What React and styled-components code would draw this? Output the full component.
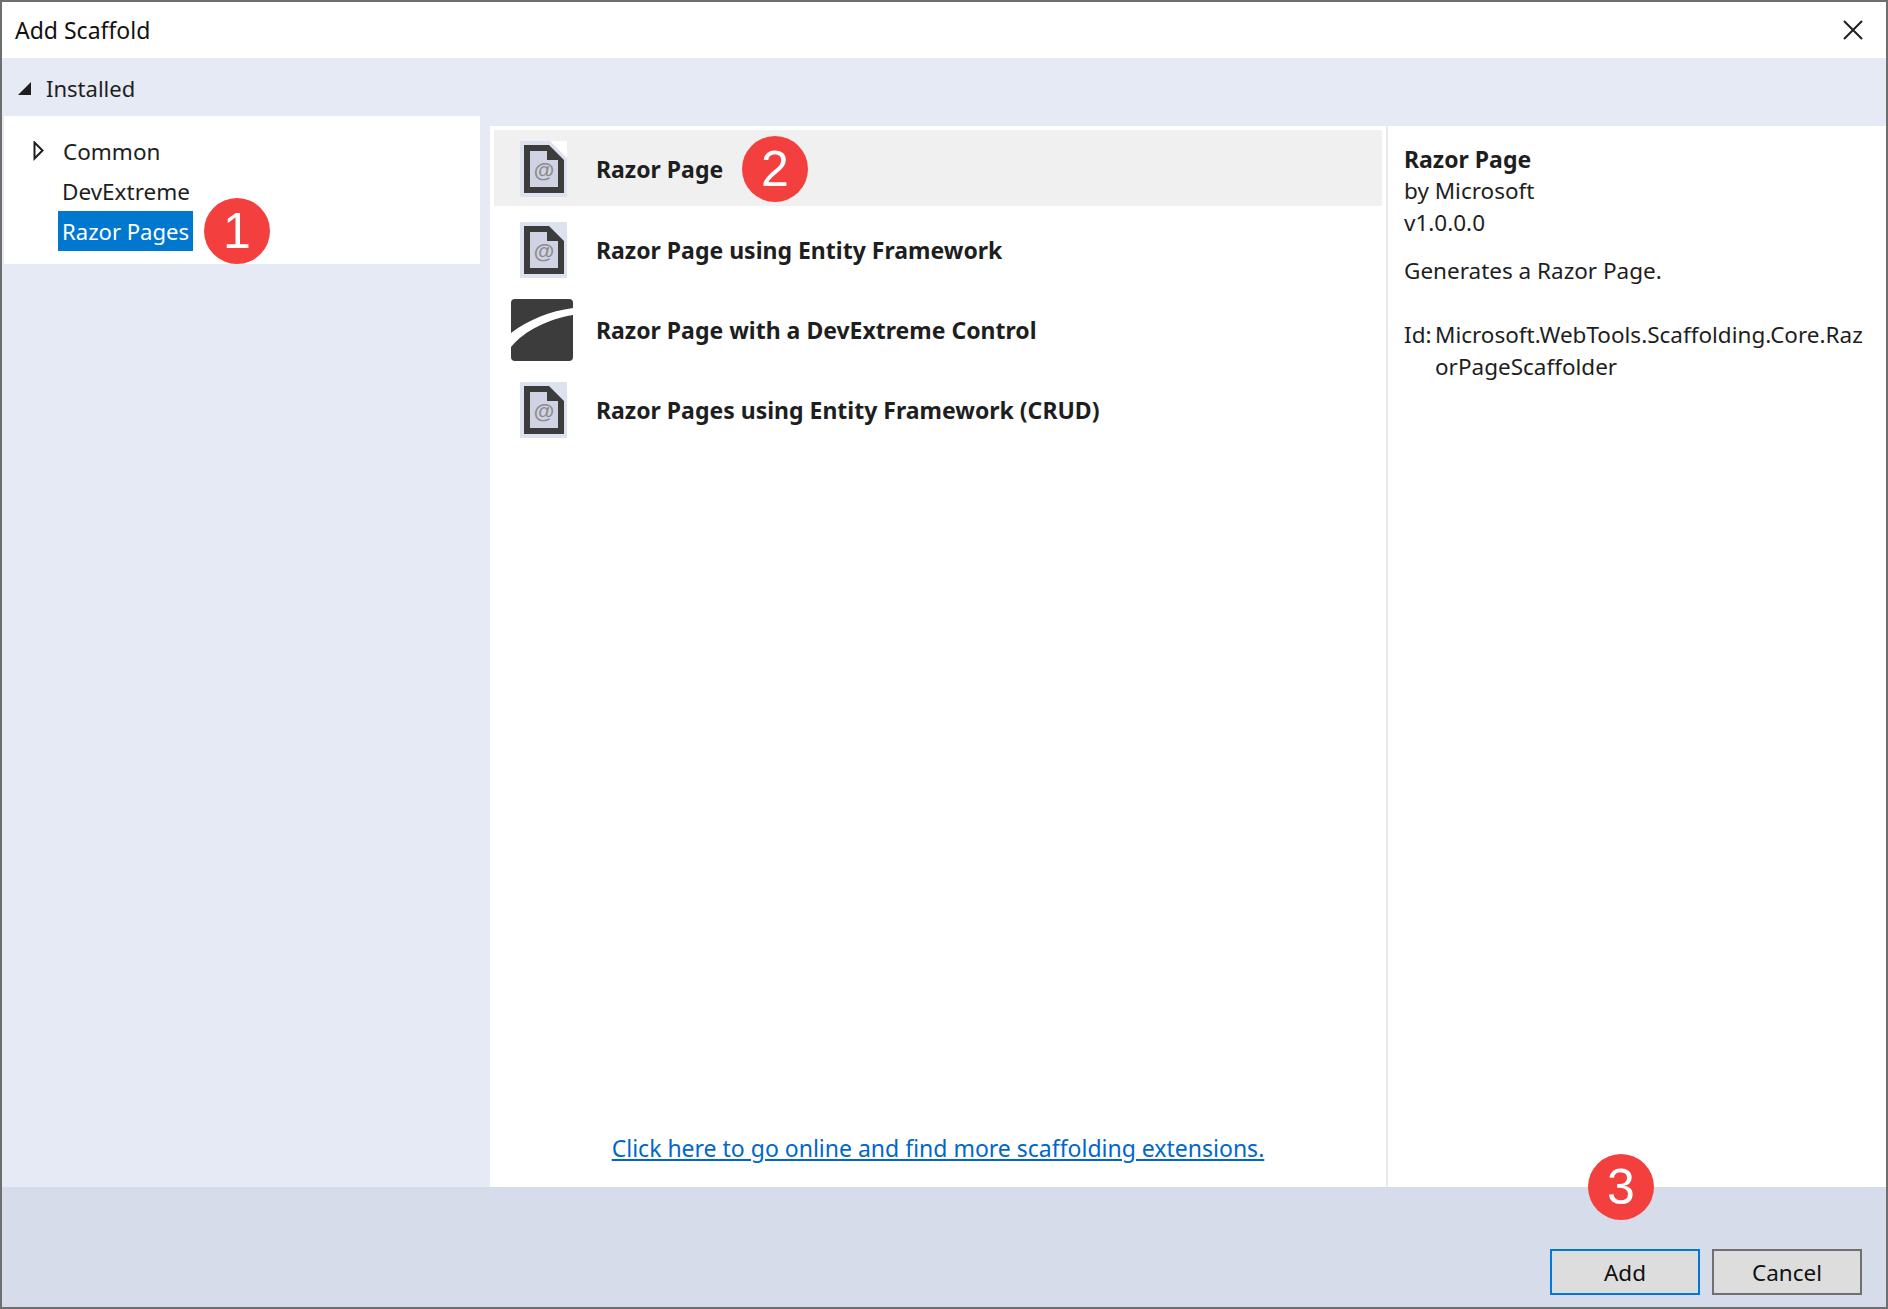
import React from "react";
import styled, { createGlobalStyle } from "styled-components";

const GlobalStyle = createGlobalStyle`
  html, body {
    margin: 0;
    padding: 0;
    background: #6e6e6e;
  }
  * {
    box-sizing: border-box;
  }
`;

const Page = styled.div`
  width: 1888px;
  height: 1309px;
  padding: 2px;
  font-family: "Noto Sans", "Open Sans", sans-serif;
  font-size: 22.5px;
  color: #1e1e1e;
`;

const Dialog = styled.div`
  position: relative;
  width: 1884px;
  height: 1305px;
  display: flex;
  flex-direction: column;
  background: #e6eaf5;
`;

const TitleBar = styled.div`
  height: 56px;
  flex: none;
  background: #fff;
  display: flex;
  align-items: center;
  justify-content: space-between;
  padding: 0 23px 0 13px;
  font-size: 23px;
  color: #111;
`;

const CloseIcon = styled.svg`
  width: 20px;
  height: 20px;
  stroke: #1e1e1e;
  stroke-width: 2;
`;

const InstalledBar = styled.div`
  height: 58px;
  flex: none;
  display: flex;
  align-items: center;
  gap: 14px;
  padding: 2px 0 0 15px;
  font-size: 22px;
`;

const Columns = styled.div`
  flex: 1;
  min-height: 0;
  display: flex;
`;

const TreePane = styled.div`
  width: 488px;
  flex: none;
  padding-left: 2px;
`;

const Tree = styled.div`
  position: relative;
  width: 476px;
  height: 148px;
  background: #fff;
  padding-top: 15px;
`;

const TreeRow = styled.div`
  height: 40px;
  display: flex;
  align-items: center;
  padding-left: ${(p) => (p.$arrow ? "29px" : "58px")};
  gap: 19px;
`;

const SelectedLabel = styled.span`
  height: 40px;
  margin-left: -4px;
  padding: 0 4px;
  display: flex;
  align-items: center;
  background: #0078d0;
  color: #fff;
  font-size: 22.1px;
`;

const Badge = styled.div`
  position: absolute;
  left: ${(p) => p.$left}px;
  top: ${(p) => p.$top}px;
  width: 66px;
  height: 66px;
  border-radius: 50%;
  background: #f43f3f;
  color: #fff;
  display: flex;
  align-items: center;
  justify-content: center;
  font-family: "Liberation Sans", Arial, sans-serif;
  font-size: 50px;
  line-height: 1;
`;

const Content = styled.div`
  flex: 1;
  min-width: 0;
  margin-top: 10px;
  display: flex;
  background: #fff;
`;

const ListPane = styled.div`
  position: relative;
  width: 896px;
  flex: none;
  padding: 4px;
  display: flex;
  flex-direction: column;
`;

const Row = styled.div`
  height: ${(p) => (p.$selected ? 76 : 80)}px;
  margin-bottom: ${(p) => (p.$selected ? 4 : 0)}px;
  padding-top: ${(p) => (p.$selected ? 2 : 0)}px;
  flex: none;
  display: flex;
  align-items: center;
  background: ${(p) => (p.$selected ? "#f0f0f0" : "transparent")};
  font-size: 23px;
  font-weight: 700;
`;

const IconSlot = styled.div`
  width: 102px;
  flex: none;
  display: flex;
  justify-content: center;
  padding-right: ${(p) => (p.$logo ? 6 : 2)}px;
`;

const LinkLine = styled.div`
  margin-top: auto;
  padding-bottom: 19px;
  text-align: center;
  font-size: 23px;
`;

const MoreLink = styled.a`
  color: #0066cc;
  text-decoration: underline;
  cursor: pointer;
`;

const Details = styled.div`
  flex: 1;
  border-left: 2px solid #e6eaf5;
  padding: 17px 16px 0 16px;
  line-height: 32px;
`;

const DetailName = styled.div`
  font-size: 23px;
  font-weight: 700;
`;

const Description = styled.div`
  margin-top: 16px;
`;

const IdLine = styled.div`
  margin-top: 32px;
  display: flex;
`;

const IdLabel = styled.span`
  width: 31px;
  flex: none;
`;

const IdValue = styled.span`
  word-break: break-all;
`;

const Footer = styled.div`
  position: relative;
  height: 120px;
  flex: none;
  background: #d6dce9;
  display: flex;
  justify-content: flex-end;
  align-items: flex-end;
  gap: 12px;
  padding: 0 24px 12px 0;
`;

const Button = styled.button`
  width: 150px;
  height: 46px;
  background: #dddddd;
  border: 2px solid ${(p) => (p.$primary ? "#0078d7" : "#707070")};
  font: inherit;
  color: #111;
  padding: 0;
`;

const Arrow = ({ open }) =>
  open ? (
    <svg width="15" height="15" viewBox="0 0 15 15">
      <path d="M14 1V14H1Z" fill="#1e1e1e" />
    </svg>
  ) : (
    <svg width="11" height="20" viewBox="0 0 11 20">
      <path d="M1.5 1.5V17.5L9.5 9.5Z" fill="none" stroke="#1e1e1e" strokeWidth="2" />
    </svg>
  );

const PageIcon = ({ selected }) => (
  <svg width="48" height="56" viewBox="0 0 48 56">
    <rect x="0" y="0" width="47" height="56" fill="#dde2ef" />
    {selected && <path d="M30 0H47V17Z" fill="#fff" />}
    <path d="M4 4H29L44 19V52H4Z" fill="#3c3c3c" />
    <path d="M10 10H27V19H38V46H10Z" fill="#d0d3e4" />
    <text x="24" y="36" textAnchor="middle" fontFamily="Liberation Sans, sans-serif" fontSize="21" fill="#8c8c8c">
      @
    </text>
  </svg>
);

const DevExtremeIcon = () => (
  <svg width="62" height="62" viewBox="0 0 62 62">
    <rect width="62" height="62" rx="4" fill="#3c3c3c" />
    <path d="M0 34C17 21 39 12 62 9V16C38 20 14 31 0 48Z" fill="#fff" />
  </svg>
);

const rows = [
  { label: "Razor Page", selected: true },
  { label: "Razor Page using Entity Framework" },
  { label: "Razor Page with a DevExtreme Control", logo: true },
  { label: "Razor Pages using Entity Framework (CRUD)" },
];

export default function App() {
  return (
    <Page>
      <GlobalStyle />
      <Dialog>
        <TitleBar>
          Add Scaffold
          <CloseIcon viewBox="0 0 20 20">
            <path d="M1 1L19 19M19 1L1 19" />
          </CloseIcon>
        </TitleBar>
        <InstalledBar>
          <Arrow open />
          Installed
        </InstalledBar>
        <Columns>
          <TreePane>
            <Tree>
              <TreeRow $arrow>
                <Arrow />
                Common
              </TreeRow>
              <TreeRow>DevExtreme</TreeRow>
              <TreeRow>
                <SelectedLabel>Razor Pages</SelectedLabel>
              </TreeRow>
              <Badge $left={200} $top={82}>1</Badge>
            </Tree>
          </TreePane>
          <Content>
            <ListPane>
              {rows.map((row) => (
                <Row key={row.label} $selected={row.selected}>
                  <IconSlot $logo={row.logo}>
                    {row.logo ? <DevExtremeIcon /> : <PageIcon selected={row.selected} />}
                  </IconSlot>
                  {row.label}
                </Row>
              ))}
              <Badge $left={252} $top={10}>2</Badge>
              <LinkLine>
                <MoreLink>Click here to go online and find more scaffolding extensions.</MoreLink>
              </LinkLine>
            </ListPane>
            <Details>
              <DetailName>Razor Page</DetailName>
              <div>by Microsoft</div>
              <div>v1.0.0.0</div>
              <Description>Generates a Razor Page.</Description>
              <IdLine>
                <IdLabel>Id:</IdLabel>
                <IdValue>Microsoft.WebTools.Scaffolding.Core.RazorPageScaffolder</IdValue>
              </IdLine>
            </Details>
          </Content>
        </Columns>
        <Footer>
          <Badge $left={1586} $top={-33}>3</Badge>
          <Button $primary>Add</Button>
          <Button>Cancel</Button>
        </Footer>
      </Dialog>
    </Page>
  );
}
